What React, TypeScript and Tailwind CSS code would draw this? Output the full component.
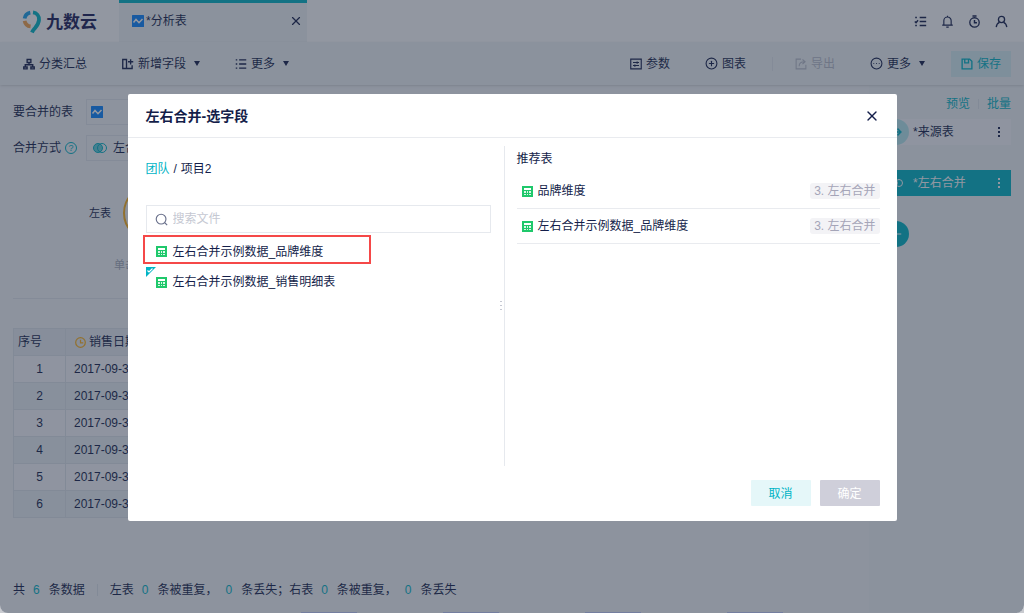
import type { ReactNode } from "react";
import { CircleEllipsis, CirclePlus, X } from "lucide-react";

interface IconProps {
  className?: string;
}

const rows = [1, 2, 3, 4, 5, 6];

const files = [
  { name: "左右合并示例数据_品牌维度", marked: true, checked: false },
  { name: "左右合并示例数据_销售明细表", marked: false, checked: true },
];

const recommended = ["品牌维度", "左右合并示例数据_品牌维度"];

function Svg({ className = "size-4", children }: IconProps & { children: ReactNode }) {
  return (
    <svg
      viewBox="0 0 16 16"
      fill="none"
      stroke="currentColor"
      strokeWidth="1.4"
      className={`shrink-0 ${className}`}
      aria-hidden="true"
    >
      {children}
    </svg>
  );
}

function Logo() {
  return (
    <svg viewBox="0 0 20 26" className="h-[26px] w-5 shrink-0" fill="none" strokeWidth="3.8" aria-hidden="true">
      <path d="M2.600 10.500A7 7 0 0 1 8.300 4.600" stroke="#1aa0e8" />
      <path d="M2.600 12.800a7 7 0 0 0 6 5.600" stroke="#f5a34a" />
      <path d="M11 4.400c3.800.5 6.300 3.500 6 7.600-.3 4-2.400 6.200-4.400 8.500-1.200 1.400-2 2.500-2.600 4" stroke="#00b6c4" />
    </svg>
  );
}

function ChartIcon({ className = "size-3" }: IconProps) {
  return (
    <svg viewBox="0 0 12 12" className={`shrink-0 ${className}`} fill="none" aria-hidden="true">
      <rect width="12" height="12" rx="0.5" fill="#0a84ff" />
      <path d="M1.500 7.500 4 4.500l3 3.200L10.500 4" stroke="#fff" strokeWidth="1.500" />
    </svg>
  );
}

function SheetIcon() {
  return (
    <svg viewBox="0 0 11 11" className="size-[11px] shrink-0" shapeRendering="crispEdges" aria-hidden="true">
      <path d="M0 0h11v11H0z" fill="#1fc86b" />
      <path d="M2 2h7v2H2z" fill="#fff" />
      <path d="M2 5h2v2H2zM5 5h1v2H5zM7 5h2v2H7zM2 8h2v1H2zM5 8h1v1H5zM7 8h2v1H7z" fill="#d9f7e6" />
    </svg>
  );
}

function Caret() {
  return (
    <svg viewBox="0 0 6 5" className="h-[5px] w-1.5 shrink-0" aria-hidden="true">
      <path d="M0 0h6L3 5z" fill="currentColor" />
    </svg>
  );
}

function ToolButton({ icon, label, caret = false }: { icon: ReactNode; label: string; caret?: boolean }) {
  return (
    <button type="button" className="flex items-center gap-1">
      {icon}
      {label}
      {caret && (
        <span className="ml-1">
          <Caret />
        </span>
      )}
    </button>
  );
}

function Header() {
  return (
    <header className="flex h-[42px] bg-white">
      <div className="flex w-[119px] shrink-0 items-center gap-1 pl-[22px]">
        <Logo />
        <span className="pt-1 text-[17px] leading-5 font-bold text-[#1a1c56]">九数云</span>
      </div>
      <div className="flex w-[188px] items-center border-t-[3px] border-[#00b4c5] bg-[#f1f5f7] pr-1 pb-1 pl-[13px]">
        <ChartIcon />
        <span className="ml-0.5 flex-1">*分析表</span>
        <button type="button" aria-label="关闭标签">
          <X className="size-3.5" strokeWidth={2} />
        </button>
      </div>
      <nav className="ml-auto flex items-center gap-3.5 pr-4">
        <button type="button" aria-label="任务">
          <Svg className="size-[13px]">
            <path d="M7 3h8M7 8h8M7 13h8M1.500 3h2M1 8l1.500 1.500L5 6.500M1.500 13h2" strokeWidth="1.800" />
          </Svg>
        </button>
        <button type="button" aria-label="通知">
          <Svg className="size-[13px]">
            <path d="M1.500 12.500h13M3.500 12.500V7a4.500 4.500 0 0 1 9 0v5.500M8 2.500V1M6.500 15h3" />
          </Svg>
        </button>
        <button type="button" aria-label="定时">
          <Svg className="size-[13px]">
            <circle cx="8" cy="9.200" r="5.800" strokeWidth="1.600" />
            <path d="M8 6v3.500h3M5.500 1.200h5" strokeWidth="1.800" />
          </Svg>
        </button>
        <button type="button" aria-label="账户">
          <Svg className="size-[13px]">
            <circle cx="8" cy="5.500" r="3.800" strokeWidth="1.600" />
            <path d="M1.500 15c.3-3 2-5 4-5.800M14.500 15c-.3-3-2-5-4-5.800" strokeWidth="1.600" />
          </Svg>
        </button>
      </nav>
    </header>
  );
}

function Toolbar() {
  return (
    <div className="relative flex h-[43px] items-center justify-between bg-[#f1f5f7] pr-[13px] pl-[23px] shadow-sm">
      <div className="flex items-center gap-[35px]">
        <ToolButton
          label="分类汇总"
          icon={
            <Svg className="size-3">
              <path d="M5.500 2h5v4h-5zM8 6v3M3 12V9h10v3M1 12h4.500v2.500H1zM10.500 12H15v2.500h-4.500z" strokeWidth="1.800" />
            </Svg>
          }
        />
        <ToolButton
          label="新增字段"
          caret
          icon={
            <Svg className="size-3">
              <path d="M1 2h5v12H1zM6 14h7.500V9.500M8 5h7M11.500 1.500v7" strokeWidth="1.800" />
            </Svg>
          }
        />
        <ToolButton
          label="更多"
          caret
          icon={
            <Svg className="size-3">
              <path d="M1 2.500h2M5.500 2.500H15M1 8h2M5.500 8H15M1 13.500h2M5.500 13.500H15" strokeWidth="1.800" />
            </Svg>
          }
        />
      </div>
      <div className="flex items-center">
        <ToolButton
          label="参数"
          icon={
            <Svg className="size-3">
              <path d="M1 1.500h14v13H1zM4 6h8M4 10h8M9.500 4.500v3M6.500 8.500v3" strokeWidth="1.500" />
            </Svg>
          }
        />
        <div className="ml-[35px]">
          <ToolButton label="图表" icon={<CirclePlus className="size-[13px]" />} />
        </div>
        <div className="mr-[22px] ml-[26px] h-3.5 border-l border-[#e2e6ec]" />
        <button type="button" disabled className="flex items-center gap-1 text-[#b9bdc9]">
          <Svg className="size-3">
            <path d="M8 1.500H1.500v13h13V9M5.500 11c0-4 2-6 7-6M10 2l3.500 3L10 8" />
          </Svg>
          导出
        </button>
        <div className="mr-[26px] ml-[35px]">
          <ToolButton label="更多" caret icon={<CircleEllipsis className="size-[13px]" />} />
        </div>
        <button type="button" className="flex h-[26px] items-center gap-1 bg-[#d6eff3] px-2.5 text-[#00b4c5]">
          <Svg className="size-3">
            <path d="M1.500 1.500h10l3 3v10h-13zM5 1.500v5h5v-5" strokeWidth="1.800" />
          </Svg>
          保存
        </button>
      </div>
    </div>
  );
}

function MergeForm() {
  return (
    <section className="flex-1 bg-[#f4f6f9] pt-3.5 pl-[13px]">
      <div className="flex h-[26px] items-center">
        <span className="w-[73px]">要合并的表</span>
        <button type="button" aria-label="要合并的表" className="flex h-full w-60 items-center border border-[#e2e6ec] pl-1">
          <ChartIcon />
        </button>
      </div>
      <div className="mt-2.5 flex h-[26px] items-center">
        <span className="flex w-[73px] items-center gap-1">
          合并方式
          <span className="flex size-3 items-center justify-center rounded-full border border-[#00b4c5] text-[9px] text-[#00b4c5]">
            ?
          </span>
        </span>
        <button type="button" className="flex h-full w-60 items-center gap-1.5 border border-[#e2e6ec] pl-1.5">
          <svg viewBox="0 0 14 10" className="h-2.5 w-3.5 text-[#00b4c5]" fill="none" stroke="currentColor" aria-hidden="true">
            <circle cx="5" cy="5" r="4.500" fill="currentColor" fillOpacity="0.600" />
            <circle cx="9" cy="5" r="4.500" />
          </svg>
          左合并
        </button>
      </div>
      <div className="mt-6 flex items-center pl-[76px] text-[11px]">
        <span className="w-[34px]">左表</span>
        <span className="size-14 rounded-full border-2 border-[#ffb31a]" />
      </div>
      <p className="mt-4 pl-[101px] text-[11px] leading-4 text-[#a5abba]">单击图形切换合并方式</p>
      <div className="mt-[25px] border-t border-[#e2e6ec]" />
      <table className="mt-[29px] w-[480px] table-fixed border-collapse">
        <thead>
          <tr className="h-[27px] bg-[#e8ecf2]">
            <th className="w-[52px] border border-[#dfe4eb] pl-1 text-left font-normal">序号</th>
            <th className="border border-[#dfe4eb] pl-[9px] text-left font-normal">
              <span className="flex items-center gap-[3px]">
                <Svg className="size-[11px] text-[#ffb31a]">
                  <circle cx="8" cy="8" r="7" strokeWidth="1.800" />
                  <path d="M8 4v4.500h4" strokeWidth="1.800" />
                </Svg>
                销售日期
              </span>
            </th>
          </tr>
        </thead>
        <tbody>
          {rows.map((row) => (
            <tr key={row} className="h-[27px] odd:bg-[#f8f9fc] even:bg-[#eaf1f5]">
              <td className="border border-[#dfe4eb] text-center">{row}</td>
              <td className="border border-[#dfe4eb] pl-2">2017-09-30</td>
            </tr>
          ))}
        </tbody>
      </table>
    </section>
  );
}

function Steps() {
  return (
    <aside className="flex w-[155px] shrink-0 flex-col bg-[#f1f5f7] pt-[9px] pr-[13px] text-[#00b4c5]">
      <div className="flex h-5 items-center justify-end">
        <a href="#">预览</a>
        <span className="mx-2 h-2.5 border-l border-[#dfe4eb]" />
        <a href="#">批量</a>
      </div>
      <div className="mt-[5px] flex h-[26px] items-center bg-[#f8f9fc] text-[#141e4a]">
        <span className="ml-3.5 flex size-[26px] items-center justify-center rounded-full bg-[#b6e9ef] text-[#00b4c5]">
          <Svg className="size-3">
            <path d="M1 8h13M10 3.500 14.500 8 10 12.500" strokeWidth="2" />
          </Svg>
        </span>
        <span className="ml-1 flex-1">*来源表</span>
        <Dots />
      </div>
      <div className="mt-[25px] flex h-[26px] items-center bg-[#00b4c5] text-white">
        <svg viewBox="0 0 14 10" className="ml-5 h-2.5 w-3.5" fill="none" stroke="currentColor" aria-hidden="true">
          <circle cx="5" cy="5" r="3.500" />
          <circle cx="10" cy="5" r="3.500" />
        </svg>
        <span className="ml-2.5 flex-1">*左右合并</span>
        <Dots />
      </div>
      <button type="button" aria-label="添加步骤" className="mt-[25px] ml-3.5 flex size-[26px] items-center justify-center rounded-full bg-[#00b4c5] text-white">
        <Svg className="size-3">
          <path d="M8 1v14M1 8h14" />
        </Svg>
      </button>
    </aside>
  );
}

function Dots() {
  return (
    <button type="button" aria-label="更多操作" className="mr-[11px]">
      <svg viewBox="0 0 2 12" className="h-3 w-0.5" fill="currentColor" aria-hidden="true">
        <path d="M0 1h2v2H0zM0 5h2v2H0zM0 9h2v2H0z" />
      </svg>
    </button>
  );
}

function Count({ value }: { value: number }) {
  return <span className="mr-[9px] ml-2 text-[#00b4c5]">{value}</span>;
}

function StatusBar() {
  return (
    <footer className="flex h-[45px] bg-[#f4f6f9]">
      <div className="flex flex-1 items-center pl-[13px]">
        共<Count value={6} />条数据
        <span className="mx-3 h-3 border-l border-[#dfe4eb]" />
        左表<Count value={0} />条被重复，
        <Count value={0} />条丢失；右表
        <Count value={0} />条被重复，
        <Count value={0} />条丢失
      </div>
      <div className="w-[155px] bg-[#f1f5f7]" />
    </footer>
  );
}

// Top edge of the chart strip below the status bar
function ChartStrip() {
  return (
    <div className="flex h-px gap-[86px] bg-[#f4f6f9] pl-[301px]">
      <span className="w-14 bg-[#c3cdfb]" />
      <span className="w-14 bg-[#c3cdfb]" />
      <span className="w-14 bg-[#c3cdfb]" />
      <span className="w-14 bg-[#c3cdfb]" />
    </div>
  );
}

function FileList() {
  return (
    <div className="relative flex w-[377px] shrink-0 flex-col border-r border-[#e6e9ee] pr-[13px] pl-[18px]">
      <nav className="mt-[13px] flex h-5 items-center gap-1">
        <a href="#" className="text-[#00b4c5]">团队</a>
        <span>/</span>
        <span>项目2</span>
      </nav>
      <label className="mt-[26px] flex h-7 items-center gap-[5px] border border-[#e6e9ee] px-2">
        <Svg className="size-[13px] text-[#69708b]">
          <circle cx="7.500" cy="7.500" r="6" />
          <path d="m12 12 3 3" />
        </Svg>
        <input type="search" placeholder="搜索文件" aria-label="搜索文件" className="w-full outline-none placeholder:text-[#c5c8d2]" />
      </label>
      <ul className="mt-0.5">
        {files.map((file) => (
          <li key={file.name} className="relative">
            {file.checked && (
              <svg viewBox="0 0 10 10" className="absolute top-[3px] left-0 size-2.5" fill="none" aria-hidden="true">
                <path d="M0 0h10L0 10z" fill="#00b4c5" />
                <path d="m1.500 3.500 1.500 1.500 3.500-3.500" stroke="#fff" strokeWidth="1.200" />
              </svg>
            )}
            <button
              type="button"
              className={`flex items-center gap-1.5 border-2 ${
                file.marked ? "-ml-[3px] h-[29px] w-[228px] border-[#f54848] pt-1 pl-[11px]" : "h-9 border-transparent pl-2"
              }`}
            >
              <SheetIcon />
              {file.name}
            </button>
          </li>
        ))}
      </ul>
      <svg viewBox="0 0 2 10" className="absolute top-[155px] right-0.5 h-2.5 w-0.5" fill="#c5c8d2" aria-hidden="true">
        <path d="M0 0h2v1H0zM0 4h2v1H0zM0 8h2v1H0z" />
      </svg>
    </div>
  );
}

function MergeDialog() {
  return (
    <div className="absolute inset-0 flex items-start justify-center bg-[#252f43]/50 pt-[94px]">
      <div role="dialog" aria-labelledby="dialog-title" className="flex h-[427px] w-[769px] flex-col rounded-[2px] bg-white">
        <div className="flex h-11 shrink-0 items-center justify-between border-b border-[#e9ebef] pr-[17px] pl-[18px]">
          <h2 id="dialog-title" className="text-[14px] font-bold">左右合并-选字段</h2>
          <button type="button" aria-label="关闭">
            <X className="size-4" strokeWidth={2} />
          </button>
        </div>
        <div className="mt-2 flex h-80 shrink-0">
          <FileList />
          <section className="flex-1 pr-[17px] pl-3">
            <h3 className="mt-[3px] flex h-5 items-center">推荐表</h3>
            <ul className="mt-[5px]">
              {recommended.map((name) => (
                <li key={name} className="flex h-[35px] items-center gap-[5px] border-b border-[#e9ebef] pl-[5px]">
                  <SheetIcon />
                  <span className="flex-1">{name}</span>
                  <span className="flex h-4 items-center rounded-[3px] bg-[#f3f3f6] px-1 text-[#a5a5b8]">3. 左右合并</span>
                </li>
              ))}
            </ul>
          </section>
        </div>
        <div className="mt-3.5 flex justify-end gap-[9px] pr-[17px]">
          <button type="button" className="h-[26px] w-[60px] rounded-[1px] bg-[#e5f7f9] pt-0.5 text-[#00b4c5]">取消</button>
          <button type="button" disabled className="h-[26px] w-[60px] rounded-[1px] bg-[#cfcfda] pt-0.5 text-white">确定</button>
        </div>
      </div>
    </div>
  );
}

export default function App() {
  return (
    <div className="bg-[#c9cbd0]">
      <div className="relative flex min-h-screen flex-col overflow-hidden rounded-b-lg font-['Liberation_Sans','Noto_Sans_CJK_SC',sans-serif] text-[12px] leading-4 text-[#141e4a]">
        <Header />
        <Toolbar />
        <div className="flex flex-1">
          <MergeForm />
          <Steps />
        </div>
        <StatusBar />
        <ChartStrip />
        <MergeDialog />
      </div>
    </div>
  );
}
